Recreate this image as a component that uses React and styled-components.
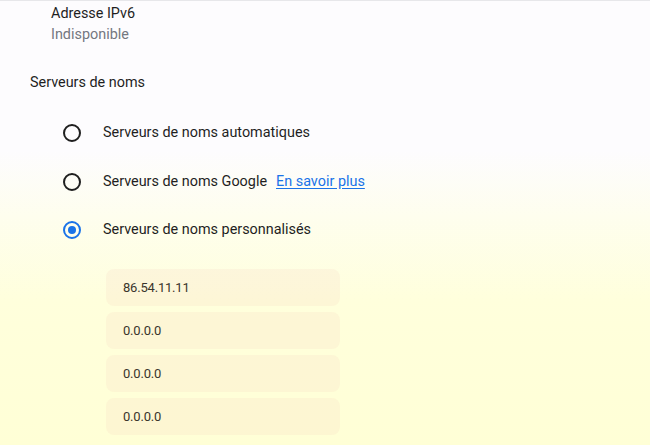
import React from "react";
import styled, { createGlobalStyle } from "styled-components";

const servers = ["86.54.11.11", "0.0.0.0", "0.0.0.0", "0.0.0.0"];

const options = [
  { label: "Serveurs de noms automatiques" },
  { label: "Serveurs de noms Google", link: "En savoir plus" },
  { label: "Serveurs de noms personnalisés", checked: true },
];

export default function App() {
  return (
    <>
      <GlobalStyle />
      <Page>
        <InfoBlock>
          <InfoTitle>Adresse IPv6</InfoTitle>
          <InfoValue>Indisponible</InfoValue>
        </InfoBlock>

        <SectionTitle>Serveurs de noms</SectionTitle>

        <RadioList>
          {options.map((opt) => (
            <RadioRow key={opt.label}>
              <Radio checked={opt.checked} />
              <RadioLabel>{opt.label}</RadioLabel>
              {opt.link && <Link href="#">{opt.link}</Link>}
            </RadioRow>
          ))}
        </RadioList>

        <ServerList>
          {servers.map((ip, i) => (
            <ServerField key={i} defaultValue={ip} />
          ))}
        </ServerList>
      </Page>
    </>
  );
}

const GlobalStyle = createGlobalStyle`
  body {
    margin: 0;
    font-family: Roboto, "Noto Sans", sans-serif;
  }
`;

const Page = styled.div`
  height: 445px;
  box-sizing: border-box;
  border-top: 1px solid #e7e7ea;
  padding-top: 2px;
  background: linear-gradient(
    to bottom,
    #fdfcfe 0,
    #fdfcfe 150px,
    #fefeee 215px,
    #ffffdc 300px,
    #ffffd6 100%
  );
  color: #1f1f1f;
  font-size: 14.4px;
`;

const InfoBlock = styled.div`
  padding-left: 51px;
`;

const InfoTitle = styled.div`
  line-height: 21px;
  color: #1f1f1f;
`;

const InfoValue = styled.div`
  line-height: 21px;
  color: #747780;
`;

const SectionTitle = styled.div`
  margin-top: 28px;
  padding-left: 30px;
  line-height: 20px;
`;

const RadioList = styled.div`
  margin-top: 16px;
  display: flex;
  flex-direction: column;
`;

const RadioRow = styled.label`
  display: flex;
  align-items: center;
  height: 48.5px;
  padding-left: 63px;
`;

const Radio = styled.span`
  width: 18px;
  height: 18px;
  box-sizing: border-box;
  border-radius: 50%;
  border: 2px solid ${(p) => (p.checked ? "#1a73e8" : "#1f1f1f")};
  display: flex;
  align-items: center;
  justify-content: center;
  margin-right: 22px;
  flex-shrink: 0;

  &::after {
    content: "";
    display: ${(p) => (p.checked ? "block" : "none")};
    width: 8px;
    height: 8px;
    border-radius: 50%;
    background: #1a73e8;
  }
`;

const RadioLabel = styled.span`
  color: #1f1f1f;
  line-height: 20px;
`;

const Link = styled.a`
  margin-left: 9px;
  color: #1a73e8;
  text-decoration: underline;
  text-underline-offset: 2px;
`;

const ServerList = styled.div`
  margin-top: 14px;
  margin-left: 106px;
  width: 234px;
  display: flex;
  flex-direction: column;
  gap: 6.3px;
`;

const ServerField = styled.input`
  height: 37px;
  box-sizing: border-box;
  border: none;
  outline: none;
  border-radius: 8px;
  padding: 0 17px;
  background: rgba(240, 200, 185, 0.16);
  color: #3a352c;
  font-family: Roboto, "Noto Sans", sans-serif;
  font-size: 13px;
  letter-spacing: -0.2px;
`;
